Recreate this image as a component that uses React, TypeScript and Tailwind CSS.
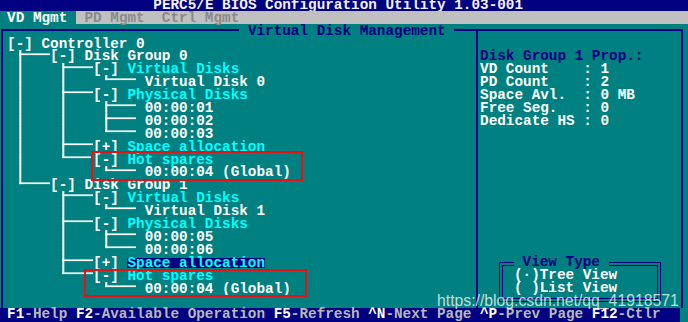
import React from "react";

const W = 8.6;
const H = 12.9;
const LINE = "#ffffff";

function Txt({ children, n, className = "" }: { children: string; n?: number; className?: string }) {
  return (
    <span
      className={"block shrink-0 whitespace-pre h-[12.9px] pt-[0.8px] leading-[12.9px] " + className}
      style={{ width: (n ?? children.length) * W }}
    >
      {children}
    </span>
  );
}

function Hl({ children }: { children: string }) {
  return (
    <span
      className="block shrink-0 whitespace-pre h-[12.9px] pt-[1.6px] pb-[0.7px] leading-[11.3px] bg-[#000080] bg-clip-content text-[#00ffff]"
      style={{ width: children.length * W }}
    >
      {children}
    </span>
  );
}

function G({ n }: { n: number }) {
  return <span className="block shrink-0 h-[12.9px]" style={{ width: n * W }} />;
}

function Bar() {
  return (
    <svg width={W} height={H} className="block shrink-0">
      <rect x={3.3} y={0} width={2} height={H} fill={LINE} />
    </svg>
  );
}

function Tee() {
  const w = 4 * W;
  return (
    <svg width={w} height={H} className="block shrink-0">
      <rect x={3.3} y={0} width={2} height={H} fill={LINE} />
      <rect x={3.3} y={3.4} width={w - 3.3} height={1.7} fill={LINE} />
    </svg>
  );
}

function End() {
  const w = 4 * W;
  return (
    <svg width={w} height={H} className="block shrink-0">
      <rect x={3.3} y={0} width={2} height={5.1} fill={LINE} />
      <rect x={3.3} y={3.4} width={w - 3.3} height={1.7} fill={LINE} />
    </svg>
  );
}

function Row({ children }: { children?: React.ReactNode }) {
  return <div className="flex h-[12.9px]">{children}</div>;
}

const WH = "text-white";
const CY = "text-[#00ffff]";

export default function App() {
  return (
    <div className="relative w-[688px] h-[322px] overflow-hidden bg-[#008080] font-['Liberation_Mono',monospace] font-bold text-[14.33px]">
      <div className="ml-[-1.5px] mt-[-1.9px] w-[689.5px] flex flex-col">
        {/* title bar */}
        <div className="flex h-[12.9px] bg-[#000080] text-[#f2f2f2]">
          <G n={18} />
          <Txt>PERC5/E BIOS Configuration Utility 1.03-001</Txt>
        </div>

        {/* tabs */}
        <div className="flex h-[12.9px]">
          <div className="bg-[#008080] text-white">
            <Txt> VD Mgmt </Txt>
          </div>
          <div className="flex-1 bg-[#c0c0c0] text-[#8a8a8a]">
            <Txt> PD Mgmt  Ctrl Mgmt</Txt>
          </div>
        </div>

        {/* main box */}
        <div className="mt-[4.7px] ml-[2.8px] w-[681.7px] h-[279.1px] border-t-2 border-l-2 border-r-2 border-[#000080] flex">
          {/* left panel: tree */}
          <div className="w-[472.7px] pl-[3.8px] flex flex-col">
            <div className="flex h-[12.9px] mt-[-6.7px] ml-[232.2px]">
              <span className="bg-[#008080] text-[#000080]">
                <Txt> Virtual Disk Management </Txt>
              </span>
            </div>
            <Row>
              <Txt className={WH}>[-] Controller 0</Txt>
            </Row>
            <Row>
              <G n={1} />
              <Tee />
              <Txt className={WH}>[-] Disk Group 0</Txt>
            </Row>
            <Row>
              <G n={1} />
              <Bar />
              <G n={4} />
              <Tee />
              <Txt className={WH}>[-] </Txt>
              <Txt className={CY}>Virtual Disks</Txt>
            </Row>
            <Row>
              <G n={1} />
              <Bar />
              <G n={4} />
              <Bar />
              <G n={4} />
              <End />
              <G n={1} />
              <Txt className={WH}>Virtual Disk 0</Txt>
            </Row>
            <Row>
              <G n={1} />
              <Bar />
              <G n={4} />
              <Tee />
              <Txt className={WH}>[-] </Txt>
              <Txt className={CY}>Physical Disks</Txt>
            </Row>
            <Row>
              <G n={1} />
              <Bar />
              <G n={4} />
              <Bar />
              <G n={4} />
              <Tee />
              <G n={1} />
              <Txt className={WH}>00:00:01</Txt>
            </Row>
            <Row>
              <G n={1} />
              <Bar />
              <G n={4} />
              <Bar />
              <G n={4} />
              <Tee />
              <G n={1} />
              <Txt className={WH}>00:00:02</Txt>
            </Row>
            <Row>
              <G n={1} />
              <Bar />
              <G n={4} />
              <Bar />
              <G n={4} />
              <End />
              <G n={1} />
              <Txt className={WH}>00:00:03</Txt>
            </Row>
            <Row>
              <G n={1} />
              <Bar />
              <G n={4} />
              <Tee />
              <Txt className={WH}>[+] </Txt>
              <Txt className={CY}>Space allocation</Txt>
            </Row>
            <Row>
              <G n={1} />
              <Bar />
              <G n={4} />
              <End />
              <Txt className={WH}>[-] </Txt>
              <Txt className={CY}>Hot spares</Txt>
            </Row>
            <Row>
              <G n={1} />
              <Bar />
              <G n={9} />
              <End />
              <G n={1} />
              <Txt className={WH}>00:00:04 (Global)</Txt>
            </Row>
            <Row>
              <G n={1} />
              <End />
              <Txt className={WH}>[-] Disk Group 1</Txt>
            </Row>
            <Row>
              <G n={6} />
              <Tee />
              <Txt className={WH}>[-] </Txt>
              <Txt className={CY}>Virtual Disks</Txt>
            </Row>
            <Row>
              <G n={6} />
              <Bar />
              <G n={4} />
              <End />
              <G n={1} />
              <Txt className={WH}>Virtual Disk 1</Txt>
            </Row>
            <Row>
              <G n={6} />
              <Tee />
              <Txt className={WH}>[-] </Txt>
              <Txt className={CY}>Physical Disks</Txt>
            </Row>
            <Row>
              <G n={6} />
              <Bar />
              <G n={4} />
              <Tee />
              <G n={1} />
              <Txt className={WH}>00:00:05</Txt>
            </Row>
            <Row>
              <G n={6} />
              <Bar />
              <G n={4} />
              <End />
              <G n={1} />
              <Txt className={WH}>00:00:06</Txt>
            </Row>
            <Row>
              <G n={6} />
              <Tee />
              <Txt className={WH}>[+] </Txt>
              <Hl>Space allocation</Hl>
            </Row>
            <Row>
              <G n={6} />
              <End />
              <Txt className={WH}>[-] </Txt>
              <Txt className={CY}>Hot spares</Txt>
            </Row>
            <Row>
              <G n={11} />
              <End />
              <G n={1} />
              <Txt className={WH}>00:00:04 (Global)</Txt>
            </Row>
            <Row />
          </div>

          {/* right panel: properties */}
          <div className="flex-1 border-l-2 border-[#000080] pl-[2.1px] pt-[6.2px] flex flex-col">
            <Row />
            <Row>
              <Txt className="text-[#000080]">Disk Group 1 Prop.:</Txt>
            </Row>
            <Row>
              <Txt className={WH}>VD Count    : 1</Txt>
            </Row>
            <Row>
              <Txt className={WH}>PD Count    : 2</Txt>
            </Row>
            <Row>
              <Txt className={WH}>Space Avl.  : 0 MB</Txt>
            </Row>
            <Row>
              <Txt className={WH}>Free Seg.   : 0</Txt>
            </Row>
            <Row>
              <Txt className={WH}>Dedicate HS : 0</Txt>
            </Row>
            <div className="h-[129px]" />
            <div className="h-[51.6px]">
              <div className="mt-[5.9px] ml-[19.2px] w-[161.9px] h-[40px] border-[4.5px] border-double border-[#000080] flex flex-col">
                <div className="flex h-[12.9px] mt-[-10.4px] ml-[10.7px]">
                  <span className="bg-[#008080] text-[#000080]">
                    <Txt> View Type </Txt>
                  </span>
                </div>
                <div className="flex h-[12.9px] ml-[10.7px]">
                  <Txt className={WH}>(·)Tree View</Txt>
                </div>
                <div className="flex h-[12.9px] ml-[10.7px]">
                  <Txt className={WH}>( )List View</Txt>
                </div>
              </div>
            </div>
          </div>
        </div>

        {/* status bar */}
        <div className="flex h-[14.3px] w-[681.5px] bg-[#000080] pl-[8.6px]">
          <Txt className="text-white">F1</Txt>
          <Txt className="text-[#b8b8b8]">-Help </Txt>
          <Txt className="text-white">F2</Txt>
          <Txt className="text-[#b8b8b8]">-Available Operation </Txt>
          <Txt className="text-white">F5</Txt>
          <Txt className="text-[#b8b8b8]">-Refresh </Txt>
          <Txt className="text-white">^N</Txt>
          <Txt className="text-[#b8b8b8]">-Next Page </Txt>
          <Txt className="text-white">^P</Txt>
          <Txt className="text-[#b8b8b8]">-Prev Page </Txt>
          <Txt className="text-white">F12</Txt>
          <Txt className="text-[#b8b8b8]">-Ctlr</Txt>
        </div>
      </div>

      {/* red annotation boxes */}
      <div className="absolute left-[91px] top-[151px] w-[212.3px] h-[30px] border-2 border-[#e81010]" />
      <div className="absolute left-[84.3px] top-[269.3px] w-[222.4px] h-[27.7px] border-2 border-[#e81010]" />

      {/* watermark */}
      <div className="absolute left-[437px] top-[292.5px] whitespace-nowrap font-['Liberation_Sans',Arial,sans-serif] font-normal text-[15.75px] leading-[16px] text-white/75">
        https://blog.csdn.net/qq_41918571
      </div>
    </div>
  );
}
